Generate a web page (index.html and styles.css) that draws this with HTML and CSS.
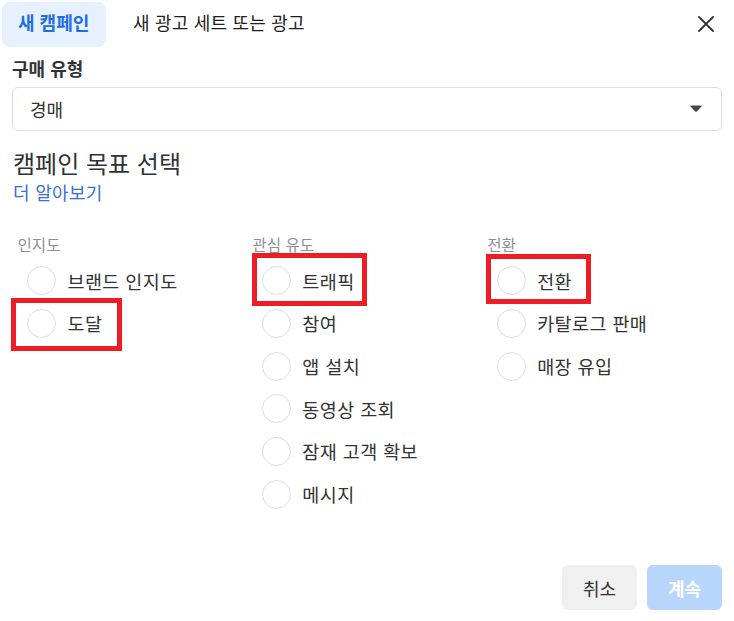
FILE: index.html
```html
<!DOCTYPE html>
<html lang="ko">
<head>
<meta charset="utf-8">
<link rel="stylesheet" href="styles.css">
</head>
<body>
<div class="dialog">
  <div class="tabs">
    <div class="tab active">새 캠페인</div>
    <div class="tab">새 광고 세트 또는 광고</div>
    <button class="close" aria-label="닫기">
      <svg width="16" height="16" viewBox="0 0 16 16"><path d="M1 1L15 15M15 1L1 15" stroke="#333" stroke-width="1.8" stroke-linecap="round" fill="none"/></svg>
    </button>
  </div>

  <div class="field-label">구매 유형</div>
  <div class="select">
    <span>경매</span>
    <svg class="caret" width="12" height="8" viewBox="0 0 12 8"><path d="M0.5 1.2Q0.5 0.5 1.3 0.5H10.7Q11.5 0.5 11.5 1.2Q11.5 1.6 11 2.1L6.8 6.6Q6 7.4 5.2 6.6L1 2.1Q0.5 1.6 0.5 1.2Z" fill="#444950"/></svg>
  </div>

  <h2 class="heading">캠페인 목표 선택</h2>
  <a class="link" href="#">더 알아보기</a>

  <div class="columns">
    <div class="col">
      <div class="col-title">인지도</div>
      <div class="option"><span class="radio"></span>브랜드 인지도</div>
      <div class="option"><span class="radio"></span>도달</div>
      <div class="mark mark-1"></div>
    </div>
    <div class="col">
      <div class="col-title">관심 유도</div>
      <div class="option"><span class="radio"></span>트래픽</div>
      <div class="option"><span class="radio"></span>참여</div>
      <div class="option"><span class="radio"></span>앱 설치</div>
      <div class="option"><span class="radio"></span>동영상 조회</div>
      <div class="option"><span class="radio"></span>잠재 고객 확보</div>
      <div class="option"><span class="radio"></span>메시지</div>
      <div class="mark mark-2"></div>
    </div>
    <div class="col">
      <div class="col-title">전환</div>
      <div class="option"><span class="radio"></span>전환</div>
      <div class="option"><span class="radio"></span>카탈로그 판매</div>
      <div class="option"><span class="radio"></span>매장 유입</div>
      <div class="mark mark-3"></div>
    </div>
  </div>

  <div class="footer">
    <button class="btn btn-cancel">취소</button>
    <button class="btn btn-continue">계속</button>
  </div>
</div>
</body>
</html>
```
FILE: styles.css
```css
html, body {
  margin: 0;
  padding: 0;
  background: #fff;
}
body {
  font-family: "Noto Sans CJK KR", "Noto Sans", "Liberation Sans", sans-serif;
  color: #1c1e21;
  width: 734px;
  height: 621px;
  overflow: hidden;
}
.dialog {
  padding: 2px 12px 0 12px;
}
.tabs {
  display: flex;
  align-items: flex-start;
  height: 45px;
  margin-left: -10px;
}
.tab {
  font-size: 18px;
  line-height: 41px;
  height: 41px;
  padding: 0 16px 4px 16px;
  color: #1c1e21;
  border-radius: 8px;
  margin-right: 11px;
  letter-spacing: 0.2px;
}
.tab.active {
  background: #e7f0fd;
  color: #1b6fe0;
  font-weight: 700;
  width: 72px;
  letter-spacing: 0;
}
.close {
  margin: 14px 8px 0 auto;
  border: 0;
  background: none;
  padding: 0;
  width: 16px;
  height: 16px;
  display: flex;
}
.field-label {
  margin-top: 9px;
  font-size: 18px;
  font-weight: 700;
  line-height: 24px;
  color: #303338;
}
.select {
  margin-top: 7px;
  height: 44px;
  box-sizing: border-box;
  border: 1px solid #dadde1;
  border-radius: 6px;
  display: flex;
  align-items: center;
  padding: 0 19px 0 17px;
  font-size: 18px;
  color: #333;
}
.caret {
  margin-left: auto;
}
.heading {
  margin: 16px 0 0 1px;
  font-size: 24px;
  font-weight: 400;
  line-height: 32px;
  color: #303338;
}
.link {
  display: block;
  margin: 1px 0 0 1px;
  font-size: 18px;
  line-height: 24px;
  color: #3b6fd6;
  text-decoration: none;
  letter-spacing: 0.3px;
}
.columns {
  display: flex;
  margin-top: 30px;
  padding-left: 5.5px;
}
.col {
  position: relative;
  width: 236.5px;
}
.col-title {
  font-size: 15.6px;
  line-height: 20px;
  color: #8d9096;
  margin-bottom: 5.5px;
}
.option {
  display: flex;
  align-items: center;
  height: 42.67px;
  padding-left: 9.5px;
  font-size: 18.5px;
  letter-spacing: 0.4px;
  color: #333;
}
.radio {
  width: 29px;
  height: 29px;
  box-sizing: border-box;
  border: 1px solid #dadde1;
  border-radius: 50%;
  margin-right: 11.5px;
  flex: none;
}
.mark {
  position: absolute;
  box-sizing: border-box;
  border: 5px solid #ee1c25;
}
.mark-1 {
  left: -6.5px;
  top: 64px;
  width: 111px;
  height: 53px;
}
.mark-2 {
  left: 0;
  top: 19px;
  width: 115px;
  height: 53px;
}
.mark-3 {
  left: -1.5px;
  top: 20px;
  width: 105px;
  height: 50px;
}
.footer {
  position: absolute;
  right: 12px;
  top: 565px;
  display: flex;
  gap: 10px;
}
.btn {
  font-family: inherit;
  font-size: 18px;
  height: 45px;
  width: 75px;
  border: 0;
  border-radius: 6px;
  padding: 0;
}
.btn-cancel {
  background: #f0f0f0;
  color: #333;
}
.btn-continue {
  background: #b8d6fb;
  color: #fff;
  font-weight: 700;
}
```
